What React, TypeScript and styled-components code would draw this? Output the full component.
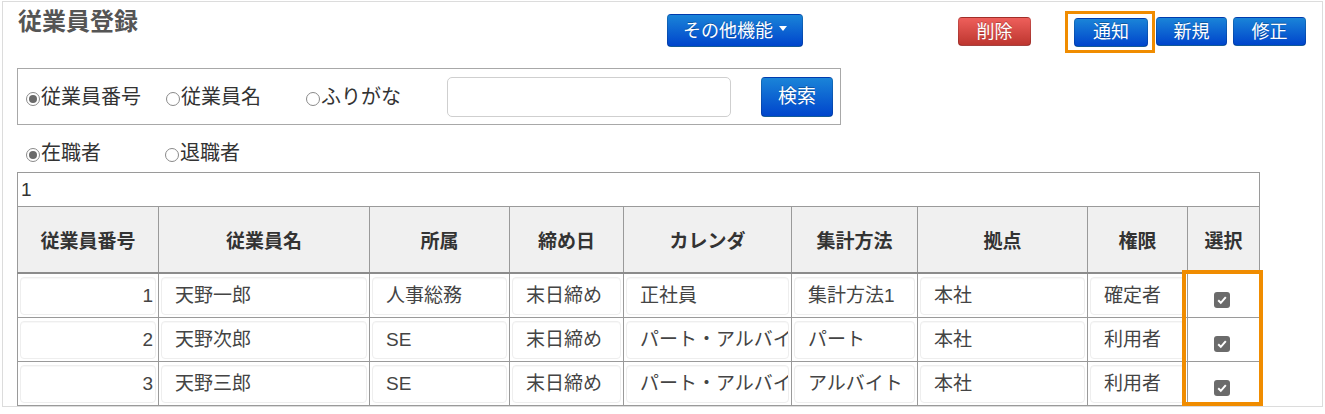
import React from "react";
import styled, { createGlobalStyle } from "styled-components";

const GlobalStyle = createGlobalStyle`
  body {
    margin: 0;
    background: #ffffff;
    font-family: "Liberation Sans", "Noto Sans CJK JP", sans-serif;
    color: #333;
  }
`;

const Panel = styled.div`
  position: relative;
  margin: 1px 0 0 2px;
  width: 1321px;
  height: 406px;
  box-sizing: border-box;
  border: 1px solid #dcdcdc;
  padding-left: 14px;
  overflow: hidden;
`;

const TopBar = styled.div`
  display: flex;
  align-items: flex-start;
  height: 66px;
`;

const Title = styled.h1`
  margin: 5px 0 0 1px;
  width: 649px;
  font-size: 24px;
  line-height: 30px;
  font-weight: bold;
  color: #555;
`;

const Btn = styled.button<{ $w: number; $h?: number; $danger?: boolean }>`
  width: ${(p) => p.$w}px;
  height: ${(p) => p.$h || 29}px;
  padding: 0;
  box-sizing: border-box;
  border: 1px solid rgba(0, 0, 0, 0.15);
  border-bottom-color: rgba(0, 0, 0, 0.3);
  border-radius: 4px;
  background-image: ${(p) =>
    p.$danger
      ? "linear-gradient(to bottom, #ee5f5b, #bd362f)"
      : "linear-gradient(to bottom, #1a84d8, #0045cc)"};
  color: #fff;
  font-family: "Liberation Sans", "Noto Sans CJK JP", sans-serif;
  font-size: 18px;
  line-height: 1;
  text-shadow: 0 -1px 0 rgba(0, 0, 0, 0.25);
  display: flex;
  align-items: center;
  justify-content: center;
  gap: 6px;
  cursor: pointer;
`;

const MoreButton = styled(Btn)`
  margin-top: 12px;
`;

const Caret = styled.span`
  display: inline-block;
  width: 0;
  height: 0;
  border-left: 4px solid transparent;
  border-right: 4px solid transparent;
  border-top: 5px solid #fff;
  margin-top: -4px;
`;

const ActionGroup = styled.div`
  display: flex;
  align-items: center;
  height: 43px;
  margin: 8px 0 0 155px;
`;

const Highlight = styled.div`
  border: 3px solid #f08c00;
  padding: 4px 4px 3px 6px;
  margin-left: 34px;
`;

const SearchBox = styled.div`
  display: flex;
  align-items: center;
  width: 824px;
  height: 57px;
  box-sizing: border-box;
  border: 1px solid #a8a8a8;
  padding-left: 8px;
`;

const RadioLabel = styled.label<{ $w: number }>`
  display: flex;
  align-items: center;
  width: ${(p) => p.$w}px;
  font-size: 20px;
  line-height: 24px;
  color: #333;
`;

const RadioMark = styled.span<{ $on?: boolean }>`
  position: relative;
  flex: 0 0 auto;
  width: 14px;
  height: 14px;
  box-sizing: border-box;
  border: 1px solid #8a8a8a;
  border-radius: 50%;
  margin: 4px 1px 0 0;
  background: #fff;
  &::after {
    content: "";
    display: ${(p) => (p.$on ? "block" : "none")};
    position: absolute;
    left: 2px;
    top: 2px;
    width: 8px;
    height: 8px;
    border-radius: 50%;
    background: #6a6a6a;
  }
`;

const SearchInput = styled.input`
  width: 284px;
  height: 40px;
  box-sizing: border-box;
  border: 1px solid #cfcfcf;
  border-radius: 5px;
  margin-left: 2px;
`;

const SearchButton = styled(Btn)`
  margin-left: 30px;
  font-size: 19px;
`;

const StatusRow = styled.div`
  display: flex;
  align-items: flex-end;
  height: 47px;
  box-sizing: border-box;
  padding: 0 0 7px 9px;
`;

const TableWrap = styled.div`
  position: relative;
  width: 1242px;
`;

const Table = styled.table`
  width: 1242px;
  table-layout: fixed;
  border-collapse: collapse;
  font-size: 19px;
  color: #444;
`;

const CountCell = styled.td`
  height: 33px;
  padding: 0 0 0 3px;
  border: 1px solid #9a9a9a;
  color: #333;
  line-height: 22px;
  vertical-align: middle;
`;

const HeadCell = styled.th`
  height: 65px;
  padding: 0;
  background: #f0f0f0;
  border: 1px solid #9a9a9a;
  border-bottom: 2px solid #8c8c8c;
  font-weight: bold;
  color: #333;
  text-align: center;
`;

const BodyCell = styled.td`
  height: 43px;
  padding: 0;
  border: 1px solid #9a9a9a;
  vertical-align: middle;
`;

const Field = styled.div<{ $right?: boolean }>`
  height: 38px;
  margin: 0 2px;
  box-sizing: border-box;
  border: 1px solid #eeeeee;
  border-radius: 4px;
  box-shadow: inset 0 1px 1px rgba(0, 0, 0, 0.03);
  display: flex;
  align-items: center;
  justify-content: ${(p) => (p.$right ? "flex-end" : "flex-start")};
  padding: ${(p) => (p.$right ? "0 2px 0 0" : "0 0 0 13px")};
  line-height: 24px;
  white-space: nowrap;
  overflow: hidden;
`;

const CheckCell = styled.div`
  display: flex;
  justify-content: center;
  padding: 8px 3px 0 0;
`;

const CheckBox = styled.span`
  width: 16px;
  height: 16px;
  border-radius: 3px;
  background: #6b6b6b;
  display: flex;
  align-items: center;
  justify-content: center;
`;

const ColumnMark = styled.div`
  position: absolute;
  left: 1165px;
  top: 98px;
  width: 81px;
  height: 136px;
  box-sizing: border-box;
  border: 4px solid #f08c00;
  pointer-events: none;
`;

const columns = [
  { label: "従業員番号", width: 141 },
  { label: "従業員名", width: 211 },
  { label: "所属", width: 140 },
  { label: "締め日", width: 114 },
  { label: "カレンダ", width: 168 },
  { label: "集計方法", width: 126 },
  { label: "拠点", width: 170 },
  { label: "権限", width: 100 },
  { label: "選択", width: 72 },
];

const rows = [
  ["1", "天野一郎", "人事総務", "末日締め", "正社員", "集計方法1", "本社", "確定者"],
  ["2", "天野次郎", "SE", "末日締め", "パート・アルバイト", "パート", "本社", "利用者"],
  ["3", "天野三郎", "SE", "末日締め", "パート・アルバイト", "アルバイト", "本社", "利用者"],
  ["", "", "", "", "", "", "", ""],
];

const Check = () => (
  <CheckBox>
    <svg width="12" height="12" viewBox="0 0 12 12">
      <path d="M2.2 6.3 L4.8 8.8 L9.8 3.2" fill="none" stroke="#fff" strokeWidth="2" />
    </svg>
  </CheckBox>
);

const App = () => {
  return (
    <>
      <GlobalStyle />
      <Panel>
        <TopBar>
          <Title>従業員登録</Title>
          <MoreButton $w={136} $h={33}>
            その他機能 <Caret />
          </MoreButton>
          <ActionGroup>
            <Btn $w={73} $danger>
              削除
            </Btn>
            <Highlight>
              <Btn $w={74}>通知</Btn>
            </Highlight>
            <Btn $w={71} style={{ marginLeft: 1 }}>
              新規
            </Btn>
            <Btn $w={73} style={{ marginLeft: 6 }}>
              修正
            </Btn>
          </ActionGroup>
        </TopBar>

        <SearchBox>
          <RadioLabel $w={140}>
            <RadioMark $on />
            従業員番号
          </RadioLabel>
          <RadioLabel $w={140}>
            <RadioMark />
            従業員名
          </RadioLabel>
          <RadioLabel $w={139}>
            <RadioMark />
            ふりがな
          </RadioLabel>
          <SearchInput />
          <SearchButton $w={72} $h={40}>
            検索
          </SearchButton>
        </SearchBox>

        <StatusRow>
          <RadioLabel $w={139}>
            <RadioMark $on />
            在職者
          </RadioLabel>
          <RadioLabel $w={139}>
            <RadioMark />
            退職者
          </RadioLabel>
        </StatusRow>

        <TableWrap>
          <Table>
            <colgroup>
              {columns.map((c) => (
                <col key={c.label} style={{ width: c.width }} />
              ))}
            </colgroup>
            <tbody>
              <tr>
                <CountCell colSpan={9}>1</CountCell>
              </tr>
              <tr>
                {columns.map((c) => (
                  <HeadCell key={c.label}>{c.label}</HeadCell>
                ))}
              </tr>
              {rows.map((r, i) => (
                <tr key={i}>
                  {r.map((v, j) => (
                    <BodyCell key={j}>
                      <Field $right={j == 0}>{v}</Field>
                    </BodyCell>
                  ))}
                  <BodyCell>
                    {r[0] ? (
                      <CheckCell>
                        <Check />
                      </CheckCell>
                    ) : null}
                  </BodyCell>
                </tr>
              ))}
            </tbody>
          </Table>
          <ColumnMark />
        </TableWrap>
      </Panel>
    </>
  );
};

export default App;
